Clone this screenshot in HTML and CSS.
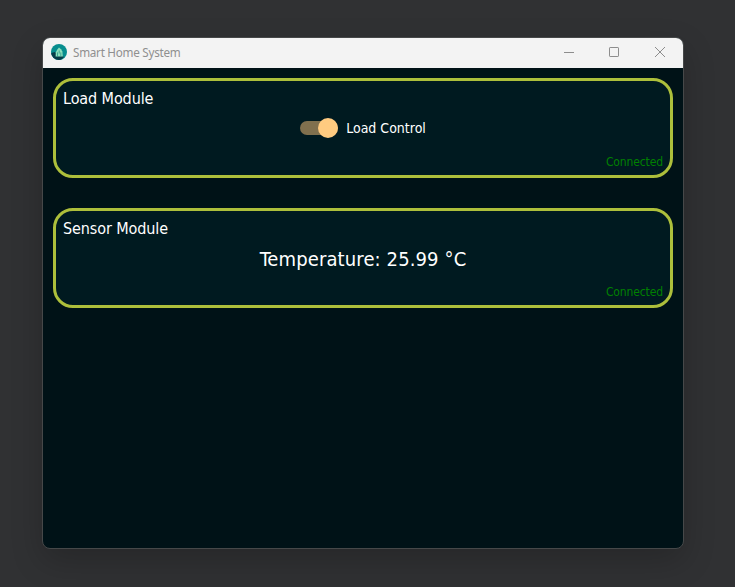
FILE: index.html
```
<!DOCTYPE html>
<html lang="en">
<head>
<meta charset="utf-8">
<title>Smart Home System</title>
<link rel="stylesheet" href="styles.css">
</head>
<body>
<main class="window">
  <header class="titlebar">
    <svg class="logo" viewBox="0 0 16 16">
      <defs><clipPath id="disc"><circle cx="8" cy="8" r="8"/></clipPath></defs>
      <g clip-path="url(#disc)">
        <path fill="#078d8e" d="M0 0h16v16H0z"/>
        <path fill="#063d49" d="M0 9l4-1 9 5-3 3H0z"/>
        <path fill="#8ce0bd" d="M8 3.5l2 1.7 1.4 2.3.4 5.1H4.6l.2-4.4L6.3 5.4z"/>
        <path stroke="#218e83" stroke-width=".7" fill="none" d="M6.5 12.5V8.4M8.2 6.5v3M9.8 12.5V8.4"/>
      </g>
    </svg>
    <span class="title">Smart Home System</span>
    <div class="controls">
      <svg viewBox="0 0 10 10"><path d="M1 5.5h10"/></svg>
      <svg viewBox="0 0 10 10"><rect x=".5" y=".5" width="9" height="9" rx=".6"/></svg>
      <svg viewBox="0 0 10 10"><path d="M0 0l10 10M10 0L0 10"/></svg>
    </div>
  </header>
  <div class="modules">
    <section class="card">
      <h2 class="name">Load Module</h2>
      <label class="control"><span class="switch"><span class="knob"></span></span><span class="label">Load Control</span></label>
      <p class="status">Connected</p>
    </section>
    <section class="card">
      <h2 class="name">Sensor Module</h2>
      <p class="reading">Temperature: 25.99 °C</p>
      <p class="status">Connected</p>
    </section>
  </div>
</main>
</body>
</html>
```
FILE: styles.css
```
* { box-sizing: border-box; }
body {
  margin: 0;
  height: 587px;
  padding: 37px 51px 38px 42px;
  overflow: hidden;
  background: #303133;
  font-family: "DejaVu Sans Condensed", "DejaVu Sans", sans-serif;
  font-stretch: condensed;
  color: #fff;
}
.window {
  width: 642px;
  height: 512px;
  border: 1px solid #464849;
  border-radius: 8px;
  overflow: hidden;
  background: #001217;
  box-shadow: 0 12px 32px rgba(0, 0, 0, .2);
}
.titlebar {
  display: flex;
  align-items: center;
  height: 30px;
  padding-left: 8px;
  background: #f3f3f3;
}
.logo { width: 16px; height: 16px; margin-top: -2px; }
.title {
  margin: -2px 0 0 6px;
  font-family: "Noto Sans", sans-serif;
  font-stretch: normal;
  font-size: 11.7px;
  line-height: 16px;
  color: #8f8f8f;
  letter-spacing: -.27px;
}
.controls { display: flex; gap: 35px; margin: -2px 17px 0 auto; }
.controls svg {
  width: 10px;
  height: 10px;
  margin-right: 1px;
  fill: none;
  stroke: #8d8d8d;
  overflow: visible;
}
.modules { display: grid; gap: 30px; padding: 10px; }
.card {
  display: grid;
  grid-template-rows: 30px 34px 30px;
  height: 100px;
  padding: 0 7px;
  border: 3px solid #adbf3b;
  border-radius: 20px;
  background: #001a20;
}
.name, .reading, .status { margin: 0; font-weight: 400; white-space: nowrap; }
.name { font-size: 16px; line-height: 35px; letter-spacing: -.1px; }
.control { display: flex; align-items: center; justify-content: center; gap: 8px; height: 34px; padding-bottom: 1px; }
.switch {
  display: flex;
  align-items: center;
  justify-content: flex-end;
  width: 38px;
  height: 14px;
  border-radius: 7px;
  background: #80704e;
}
.knob { flex: none; width: 20px; height: 20px; border-radius: 50%; background: #ffcb80; }
.label { font-size: 14px; line-height: 20px; }
.reading { font-size: 20px; line-height: 36px; text-align: center; letter-spacing: .12px; }
.status { font-size: 12px; line-height: 34px; text-align: right; color: #008000; letter-spacing: -.12px; }
```
